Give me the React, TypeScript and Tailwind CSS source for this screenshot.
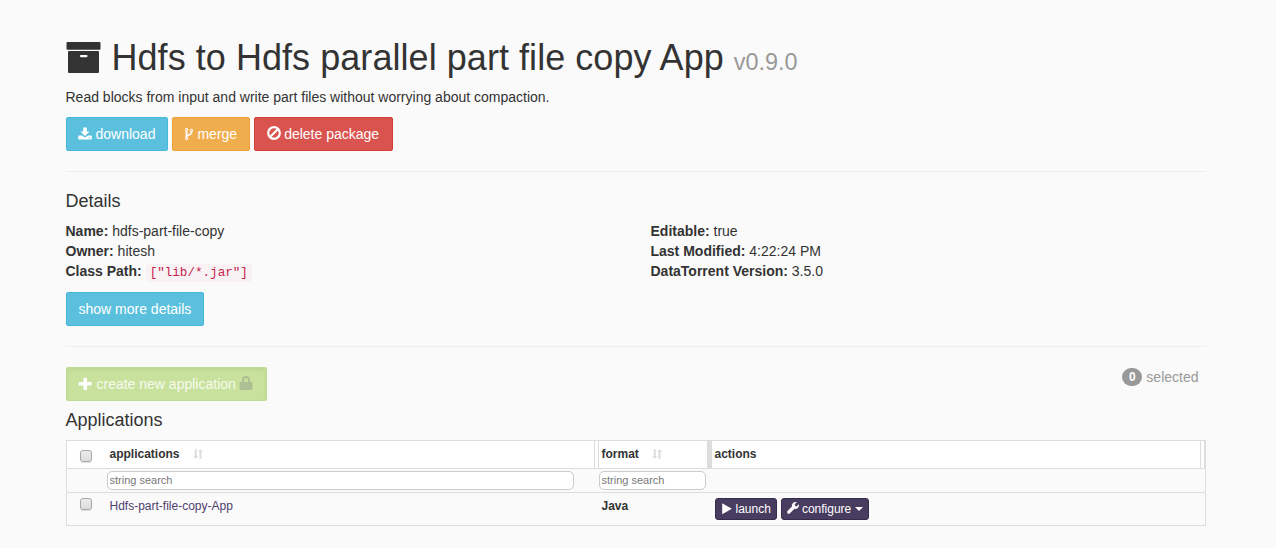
import React from "react";

type IconProps = { className?: string };

const ArchiveIcon = ({ className }: IconProps) => (
  <svg className={className} viewBox="0 0 36 32" fill="currentColor">
    <path d="M1.5 0H33.500Q34.500 0 34.500 1V6.800Q34.500 7.800 33.500 7.800H1.5Q.5 7.800 .5 6.800V1Q.5 0 1.5 0Z" />
    <path fillRule="evenodd" d="M3 9H32Q33 9 33 10V30Q33 31 32 31H3Q2 31 2 30V10Q2 9 3 9ZM15 13A1.100 1.100 0 0 0 15 15.200H20.500A1.100 1.100 0 0 0 20.500 13Z" />
  </svg>
);

const DownloadIcon = ({ className }: IconProps) => (
  <svg className={className} viewBox="0 0 14 14" fill="currentColor">
    <path d="M5.200 .5H8.800V4.500H11.500L7 9L2.500 4.500H5.200Z" />
    <path fillRule="evenodd" d="M.8 8.500H3.800L7 10.500L10.200 8.500H13.200Q13.800 8.500 13.800 9.200V11.800Q13.800 12.500 13.200 12.500H.8Q.2 12.500 .2 11.800V9.200Q.2 8.500 .8 8.500ZM10.500 10.500V11.300H12.300V10.500Z" />
  </svg>
);

const ForkIcon = ({ className }: IconProps) => (
  <svg className={className} viewBox="384 0 1024 1792" fill="currentColor" stroke="currentColor" strokeWidth="50">
    <path d="M672 1472q0-40-28-68t-68-28-68 28-28 68 28 68 68 28 68-28 28-68zm0-1152q0-40-28-68t-68-28-68 28-28 68 28 68 68 28 68-28 28-68zm640 128q0-40-28-68t-68-28-68 28-28 68 28 68 68 28 68-28 28-68zm96 0q0 52-26 96.500t-70 69.500q-2 287-226 414-67 38-203 81-128 40-169.500 71t-41.500 100v26q44 25 70 69.500t26 96.500q0 80-56 136t-136 56-136-56-56-136q0-52 26-96.500t70-69.500v-820q-44-25-70-69.500t-26-96.500q0-80 56-136t136-56 136 56 56 136q0 52-26 96.500t-70 69.500v497q54-26 154-57 55-17 87.500-29.500t70.500-31 59-39.500 40.500-51 28-69.500 8.500-91.500q-44-25-70-69.500t-26-96.500q0-80 56-136t136-56 136 56 56 136z" />
  </svg>
);

const BanIcon = ({ className }: IconProps) => (
  <svg className={className} viewBox="0 0 14 14" fill="none" stroke="currentColor" strokeWidth="2.200">
    <circle cx="7" cy="7" r="5.800" />
    <path d="M3 11L11 3" />
  </svg>
);

const PlusIcon = ({ className }: IconProps) => (
  <svg className={className} viewBox="0 0 14 14" fill="currentColor">
    <path d="M5.500 .7H9V5H13.500V8.500H9V13H5.500V8.500H.7V5H5.500Z" />
  </svg>
);

const LockIcon = ({ className }: IconProps) => (
  <svg className={className} viewBox="0 0 14 14" fill="currentColor">
    <path fillRule="evenodd" d="M3 6V3.800A3.800 3.800 0 0 1 6.800 0H7.200A3.800 3.800 0 0 1 11 3.800V6H12.500Q13.500 6 13.500 7V13Q13.500 14 12.500 14H1.500Q.5 14 .5 13V7Q.5 6 1.500 6ZM5 6H9V4A2 2 0 0 0 5 4Z" />
  </svg>
);

const PlayIcon = ({ className }: IconProps) => (
  <svg className={className} viewBox="0 0 12 12" fill="currentColor">
    <path d="M1.200 .3L10.800 5.800L1.200 11.300Z" />
  </svg>
);

const WrenchIcon = ({ className }: IconProps) => (
  <svg className={className} viewBox="0 0 12 12" fill="currentColor" stroke="currentColor" strokeWidth="0.300">
    <path d="M11.800 2.400L9.700 4.400L7.900 4L7.600 2.200L9.600 .2Q7.600-.3 6 1.200Q4.700 2.500 5.100 4.400L.5 9.200Q-.1 10 .6 11.200Q1.700 12.200 2.600 11.500L7.400 6.700Q9.300 7.200 10.700 5.900Q12.200 4.400 11.800 2.400Z" />
  </svg>
);

const SortIcon = ({ className }: IconProps) => (
  <svg className={className} viewBox="0 0 10 12" fill="currentColor">
    <path d="M1.800 1H3.800V8H5.200L2.800 11L.2 8H1.800Z" />
    <path d="M6.500 11H8.500V4H9.900L7.500 1L5.100 4H6.500Z" />
  </svg>
);

function Checkbox() {
  return (
    <span
      role="checkbox"
      aria-checked="false"
      className="block h-3 w-3 rounded-[3px] border border-[#a6a6a6] bg-linear-to-b from-[#ececec] to-[#dcdcdc] shadow-[0_1px_1px_rgba(0,0,0,.12)]"
    />
  );
}

const button = "flex h-[34px] items-center rounded-[2px] border pl-3 text-[14px] leading-5 text-white";
const smallButton =
  "flex h-[22px] items-center rounded-[3px] border border-[#352c4a] bg-[#483c60] px-[5px] text-[12px] leading-[18px] text-white";
const search =
  "block h-[19px] rounded-[5px] border border-[#ccc] bg-white px-[2px] pb-[2px] text-[11px] text-[#333] placeholder:text-[#777] placeholder:opacity-100";

export default function App() {
  return (
    <div className="h-[548px] w-full overflow-hidden bg-[#fafafa] pl-[65.5px] font-['Liberation_Sans',Arial,sans-serif] text-[14px] leading-5 text-[#333]">
      <main className="w-[1140px] pt-[38px]">
        <h1 className="flex items-baseline text-[36px] leading-10 font-normal">
          <ArchiveIcon className="mr-[10px] h-8 w-9 translate-y-[4px]" />
          <span className="tracking-[0.05px]">Hdfs to Hdfs parallel part file copy App</span>
          <small className="ml-[10px] text-[23.4px] leading-6 text-[#999]">v0.9.0</small>
        </h1>
        <p className="mt-[9px]">Read blocks from input and write part files without worrying about compaction.</p>
        <div className="mt-[10px] flex gap-1">
          <button className={`${button} border-[#46b8da] bg-[#5bc0de] pr-3`}>
            <DownloadIcon className="mr-[3.5px] -ml-[0.5px] h-3.5 w-3.5" />
            download
          </button>
          <button className={`${button} border-[#eea236] bg-[#f0ad4e] pr-3`}>
            <ForkIcon className="mr-1 h-3.5 w-2" />
            merge
          </button>
          <button className={`${button} border-[#d43f3a] bg-[#d9534f] pr-[13px]`}>
            <BanIcon className="mr-[3px] mb-[2px] h-3.5 w-3.5" />
            delete package
          </button>
        </div>
        <hr className="mt-5 border-[#eee]" />
        <h2 className="mt-[19px] text-[18px] leading-5">Details</h2>
        <div className="mt-[10px] grid grid-cols-[585px_1fr]">
          <div>
            <div><b>Name:</b> hdfs-part-file-copy</div>
            <div><b>Owner:</b> hitesh</div>
            <div className="h-5">
              <b>Class Path:</b>{" "}
              <code className="rounded-[2px] bg-[#f9f2f4] px-1 py-0.5 font-['Liberation_Mono',monospace] text-[12.6px] text-[#c7254e]">["lib/*.jar"]</code>
            </div>
          </div>
          <div>
            <div><b>Editable:</b> true</div>
            <div><b>Last Modified:</b> 4:22:24 PM</div>
            <div><b>DataTorrent Version:</b> 3.5.0</div>
          </div>
        </div>
        <button className={`${button} mt-[11px] border-[#46b8da] bg-[#5bc0de] pr-3`}>show more details</button>
        <hr className="mt-5 border-[#eee]" />
        <div className="mt-5 flex items-start justify-between">
          <button disabled className={`${button} border-[#bddb91] bg-[#c8e29d] pr-[13px] shadow-[inset_0_2px_4px_rgba(0,0,0,.06)]`}>
            <PlusIcon className="mr-[4.5px] -ml-[0.5px] h-3.5 w-3.5" />
            <span className="text-[#f6faef]">create new application</span>
            <LockIcon className="mb-[3px] ml-[3px] h-3.5 w-3.5 text-[#adbf94]" />
          </button>
          <div className="mr-[7px] flex items-center text-[#999]">
            <span className="mr-1 flex h-[18px] w-5 items-center justify-center rounded-full bg-[#999] text-[12px] font-bold text-white">0</span>
            selected
          </div>
        </div>
        <h2 className="mt-[9px] text-[18px] leading-5">Applications</h2>
        <section className="mt-[10px] flex h-[86px] flex-col border border-[#ddd] text-[12px]">
          <div className="flex h-7 border-b border-[#ddd] bg-white font-bold leading-[26px]">
            <div className="w-10 pt-[9px] pl-[13px]"><Checkbox /></div>
            <div className="flex w-[488px] border-r border-[#ddd] pl-[3px]">
              applications
              <SortIcon className="mt-[7px] ml-[13px] h-3 w-2.5 text-[#ddd]" />
            </div>
            <div className="ml-[3px] flex w-[114px] border-r-[5px] border-l border-[#ddd] pl-[3px]">
              format
              <SortIcon className="mt-[7px] ml-[13px] h-3 w-2.5 text-[#ddd]" />
            </div>
            <div className="mr-[3px] flex-1 border-r border-[#ddd] pl-[3px]">actions</div>
            <div className="w-px bg-[#ddd]" />
          </div>
          <div className="flex h-6 border-b border-[#ddd] pt-[2px] pl-10">
            <input aria-label="Search applications" placeholder="string search" className={`${search} w-[467px]`} />
            <input aria-label="Search format" placeholder="string search" className={`${search} ml-[25px] w-[107px]`} />
          </div>
          <div className="flex h-8 leading-[26px]">
            <div className="w-10 pt-[5px] pl-[13px]"><Checkbox /></div>
            <div className="w-[492px] pl-[3px] text-[#50406e]">Hdfs-part-file-copy-App</div>
            <div className="w-[116px] pl-[3px] font-bold">Java</div>
            <div className="flex gap-1 pt-[5px]">
              <button className={smallButton}>
                <PlayIcon className="mr-[3px] mb-px h-3 w-3" />
                launch
              </button>
              <button className={smallButton}>
                <WrenchIcon className="mr-[3px] mb-[2px] h-3 w-3" />
                configure
                <svg className="ml-1 h-1 w-2" viewBox="0 0 8 4" fill="currentColor"><path d="M0 0H8L4 4Z" /></svg>
              </button>
            </div>
          </div>
        </section>
      </main>
    </div>
  );
}
